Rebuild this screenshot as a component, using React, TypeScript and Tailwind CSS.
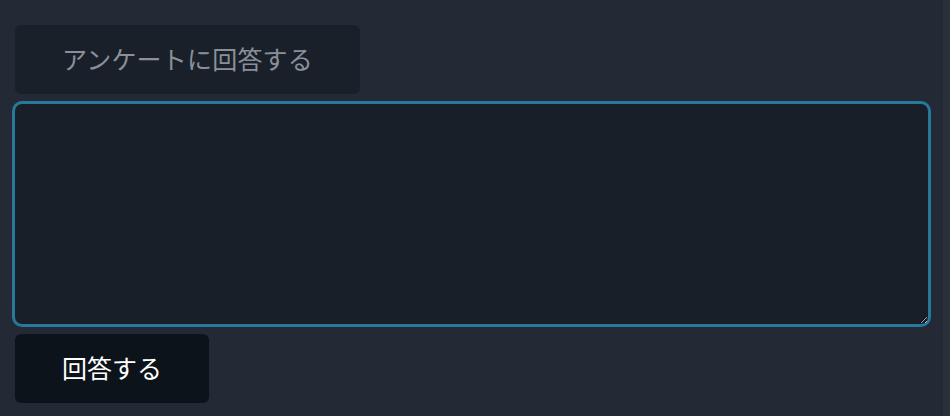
export default function App() {
  return (
    <div
      className="flex h-[416px] w-[950px] bg-[#232a36] overflow-hidden"
      style={{ fontFamily: '"Noto Sans CJK JP", "Noto Sans", sans-serif' }}
    >
      <div className="flex-1 flex flex-col pt-[25px]">
        <button className="ml-[15px] w-[345px] h-[69px] pb-[3px] rounded-md bg-[#1a2029] text-[#8a9099] text-[25px] tracking-[0.2px] leading-none flex items-center justify-center">
          アンケートに回答する
        </button>
        <textarea className="ml-3 mt-[7px] w-[919px] h-[226px] rounded-[10px] border-[3px] border-[#26799b] bg-[#191f28] outline-none text-white p-2" />
        <button className="ml-[15px] mt-[7px] w-[194px] h-[69px] pb-[3px] rounded-md bg-[#0d131a] text-white text-[25px] leading-none flex items-center justify-center">
          回答する
        </button>
      </div>
      <div className="w-[7px] bg-[#2a3039]" />
    </div>
  )
}
